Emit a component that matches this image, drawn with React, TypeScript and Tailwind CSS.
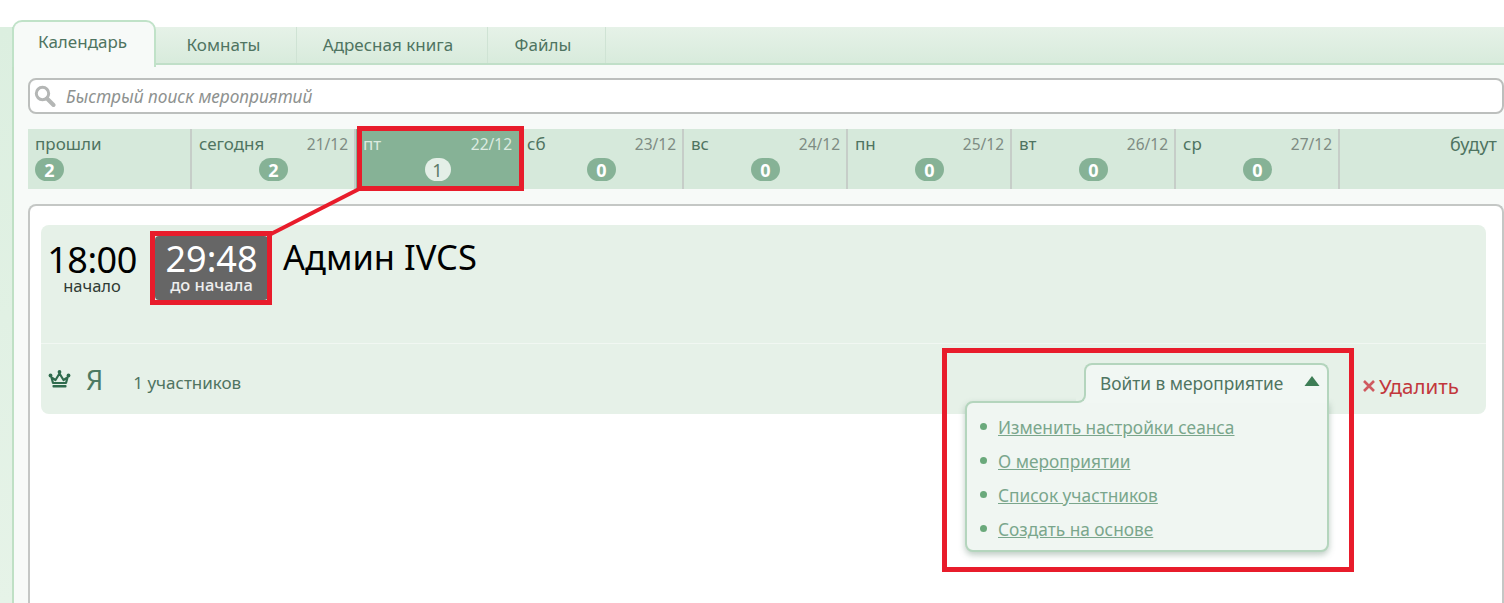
const font = { fontFamily: '"Noto Sans", "Liberation Sans", sans-serif' };

function Badge({ n, light }: { n: number; light?: boolean }) {
  return (
    <span
      className={
        "flex h-[23px] items-center justify-center rounded-[12px] text-[18px] leading-none " +
        (light ? "w-[26px] bg-[#e4efe7] font-normal text-[#5d7c69]" : "w-[29px] bg-[#86b296] font-bold text-white")
      }
    >
      {n}
    </span>
  );
}

type Cell = { day: string; date?: string; n?: number; w: string; active?: boolean; left?: boolean; right?: boolean; last?: boolean };
const cells: Cell[] = [
  { day: "прошли", n: 2, w: "w-[164px]", left: true },
  { day: "сегодня", date: "21/12", n: 2, w: "w-[164px]" },
  { day: "пт", date: "22/12", n: 1, w: "w-[164px]", active: true },
  { day: "сб", date: "23/12", n: 0, w: "w-[164px]" },
  { day: "вс", date: "24/12", n: 0, w: "w-[164px]" },
  { day: "пн", date: "25/12", n: 0, w: "w-[164px]" },
  { day: "вт", date: "26/12", n: 0, w: "w-[164px]" },
  { day: "ср", date: "27/12", n: 0, w: "w-[164px]" },
  { day: "будут", w: "flex-1", right: true, last: true },
];

function TimelineCell({ c }: { c: Cell }) {
  return (
    <div
      className={
        "relative h-[60px] shrink-0 pl-[7px] pt-[4px] " +
        c.w +
        (c.active ? " bg-[#86b296] pr-[8px]" : " bg-[#d6e9db] pr-[6px]") +
        (c.last || c.active ? "" : " border-r-2 border-[#c6cdc8]")
      }
    >
      <div className={"flex items-start justify-between text-[17px] leading-[22px] " + (c.active ? "text-[#dcebe0]" : "text-[#4f7461]")}>
        {c.right ? <span /> : <span>{c.day}</span>}
        {c.date && <span className={"text-[15.5px] " + (c.active ? "text-[#dcebe0]" : "text-[#7e8c83]")}>{c.date}</span>}
        {c.right && <span className="pr-[1px] text-[18px]">{c.day}</span>}
      </div>
      {c.n !== undefined && (
        <div className={"mt-[3px] flex " + (c.left ? "justify-start" : "justify-center")}>
          <Badge n={c.n} light={c.active} />
        </div>
      )}
    </div>
  );
}

function Crown() {
  return (
    <svg width="23" height="20" viewBox="0 0 23 20" fill="none">
      <path d="M3.5 8.5 L7.5 11 L11.5 4.5 L15.5 11 L19.5 8.5 L18 14 H5 Z" stroke="#2f6b4d" strokeWidth="2.2" strokeLinejoin="round" />
      <circle cx="11.5" cy="3" r="1.9" fill="#2f6b4d" />
      <circle cx="2.5" cy="6.5" r="1.9" fill="#2f6b4d" />
      <circle cx="20.5" cy="6.5" r="1.9" fill="#2f6b4d" />
      <rect x="4.5" y="16" width="14" height="2.5" rx="0.8" fill="#2f6b4d" />
    </svg>
  );
}

const menu = ["Изменить настройки сеанса", "О мероприятии", "Список участников", "Создать на основе"];

export default function App() {
  return (
    <div className="relative h-[603px] w-[1504px] overflow-hidden bg-white" style={font}>
      <div className="h-[27px]" />
      <div className="flex h-[576px]">
        <div className="w-[12px] shrink-0 bg-gradient-to-b from-[#dcefe0] to-[#e6f3e8]" />
        <div className="min-w-0 flex-1 border-l-2 border-[#bfe0c5] bg-[#f7faf8]">
          {/* tabs */}
          <div className="flex h-[38px] border-b-2 border-[#c0dfc8] bg-gradient-to-b from-[#e6f2e8] to-[#d8ebdc] text-[17px] text-[#4f7461]">
            <div className="relative z-10 -mt-[7px] -ml-[2px] flex h-[47px] w-[144px] items-start justify-center rounded-t-[10px] border-x-2 border-t-2 border-[#c0e2c8] bg-[#f7faf8] pr-[3px] pt-[7px] text-[#4f7461]">
              Календарь
            </div>
            <div className="flex w-[141px] items-center justify-center border-r border-[#cfe3d4] pr-[5px]">Комнаты</div>
            <div className="flex w-[191px] items-center justify-center border-r border-[#cfe3d4] pr-[8px]">Адресная книга</div>
            <div className="flex w-[118px] items-center justify-center border-r border-[#cfe3d4] pr-[7px]">Файлы</div>
          </div>

          <div className="pl-[14px]">
            {/* search */}
            <div className="mt-[13px] flex h-[36px] items-center rounded-[8px] border-2 border-[#bcbfbd] bg-white pl-[4px]">
              <svg width="22" height="24" viewBox="0 0 22 24" fill="none">
                <circle cx="8.5" cy="9.5" r="6.2" stroke="#b4b6b5" strokeWidth="3" />
                <path d="M13 14.5 L19.5 21" stroke="#b4b6b5" strokeWidth="4" strokeLinecap="round" />
              </svg>
              <span className="ml-[10px] pt-[2px] text-[17.3px] italic text-[#8e9290]">Быстрый поиск мероприятий</span>
            </div>

            {/* timeline */}
            <div className="mt-[15px] flex">
              {cells.map((c) => (
                <TimelineCell key={c.day} c={c} />
              ))}
            </div>

            {/* card */}
            <div className="mt-[15px] h-[420px] rounded-t-[8px] border-2 border-b-0 border-[#c4c7c5] bg-white pl-[11px] pr-[16px] pt-[19px]">
              <div className="rounded-[8px] bg-[#e6f1e8]">
                <div className="flex h-[119px] border-b border-[#f1f7f2] pl-[7px] pt-[15px]">
                  <div className="flex w-[88px] flex-col items-center text-black">
                    <span className="text-[36px] leading-[39px] tracking-[-0.5px]">18:00</span>
                    <span className="text-[16.5px] leading-[14px] text-[#2f3a33]">начало</span>
                  </div>
                  <div className="ml-[19px] -mt-[4px] flex h-[64px] w-[113px] flex-col items-center rounded-[4px] bg-[#666666] pt-[4px] text-white">
                    <span className="text-[36px] leading-[38px]">29:48</span>
                    <span className="text-[16.5px] font-medium leading-[14px] text-[#eeeeee]">до начала</span>
                  </div>
                  <div className="ml-[15px] -mt-[6px] text-[34.5px] leading-[46px] text-black">Админ IVCS</div>
                </div>
                <div className="relative flex h-[70px] items-center pl-[7px]">
                  <Crown />
                  <span className="ml-[15px] text-[27px] leading-none text-[#4d7a63]">Я</span>
                  <span className="ml-[30px] pt-[7px] text-[17px] text-[#4f7461]">1 участников</span>

                  {/* dropdown button + menu: overlays the content below */}
                  <div className="absolute right-[157px] top-[19px] z-10 flex flex-col items-end">
                    <div className="relative z-10 -mb-[2px] flex h-[40px] w-[245px] items-center rounded-t-[8px] border-x-2 border-t-2 border-[#b4d5bd] bg-[#f1f7f3] pl-[14px] text-[17.3px] text-[#4f7461]">
                      Войти в мероприятие
                      <svg className="absolute right-[7px] top-[10px]" width="16" height="12" viewBox="0 0 16 12">
                        <path d="M8 1 L15.5 11 H0.5 Z" fill="#3d7d55" />
                      </svg>
                      <span className="absolute -left-[10px] bottom-0 h-[10px] w-[10px] bg-[#f0f6f2]">
                        <span className="block h-full w-full rounded-br-[8px] border-b-2 border-r-2 border-[#b4d5bd] bg-[#e6f1e8]" />
                      </span>
                    </div>
                    <div className="flex h-[151px] w-[364px] flex-col gap-[12px] rounded-b-[8px] rounded-tl-[8px] border-2 border-[#b4d5bd] bg-[#f0f6f2] pl-[13px] pt-[14px] shadow-[0_3px_6px_rgba(70,110,85,0.35)]">
                      {menu.map((m) => (
                        <div key={m} className="flex h-[22px] items-center">
                          <span className="-mt-[3px] h-[7px] w-[7px] rounded-full bg-[#6aa97b]" />
                          <a className="ml-[11px] text-[17.3px] text-[#7aa68c] underline">{m}</a>
                        </div>
                      ))}
                    </div>
                  </div>

                  <div className="absolute left-[1321px] top-[29px] flex items-center text-[20.5px] leading-[26px] text-[#c2373c]">
                    <svg width="14" height="14" viewBox="0 0 14 14" className="mr-[3px]">
                      <path d="M2 2 L12 12 M12 2 L2 12" stroke="#cf5a5f" strokeWidth="2.6" />
                    </svg>
                    Удалить
                  </div>
                </div>
              </div>
            </div>
          </div>
        </div>
      </div>

      {/* red annotations lying over the screenshot */}
      <div className="pointer-events-none absolute left-[357px] top-[126px] z-20 h-[65px] w-[167px] border-[5px] border-[#e81c2b]" />
      <div className="pointer-events-none absolute left-[150px] top-[231px] z-20 h-[74px] w-[122px] border-[5px] border-[#e81c2b]" />
      <div className="pointer-events-none absolute left-[942px] top-[348px] z-20 h-[224px] w-[412px] border-[5px] border-[#e81c2b]" />
      <svg className="pointer-events-none absolute left-0 top-0 z-20" width="1504" height="603">
        <path d="M269 235 L361 188" stroke="#e81c2b" strokeWidth="4" />
      </svg>
    </div>
  );
}
